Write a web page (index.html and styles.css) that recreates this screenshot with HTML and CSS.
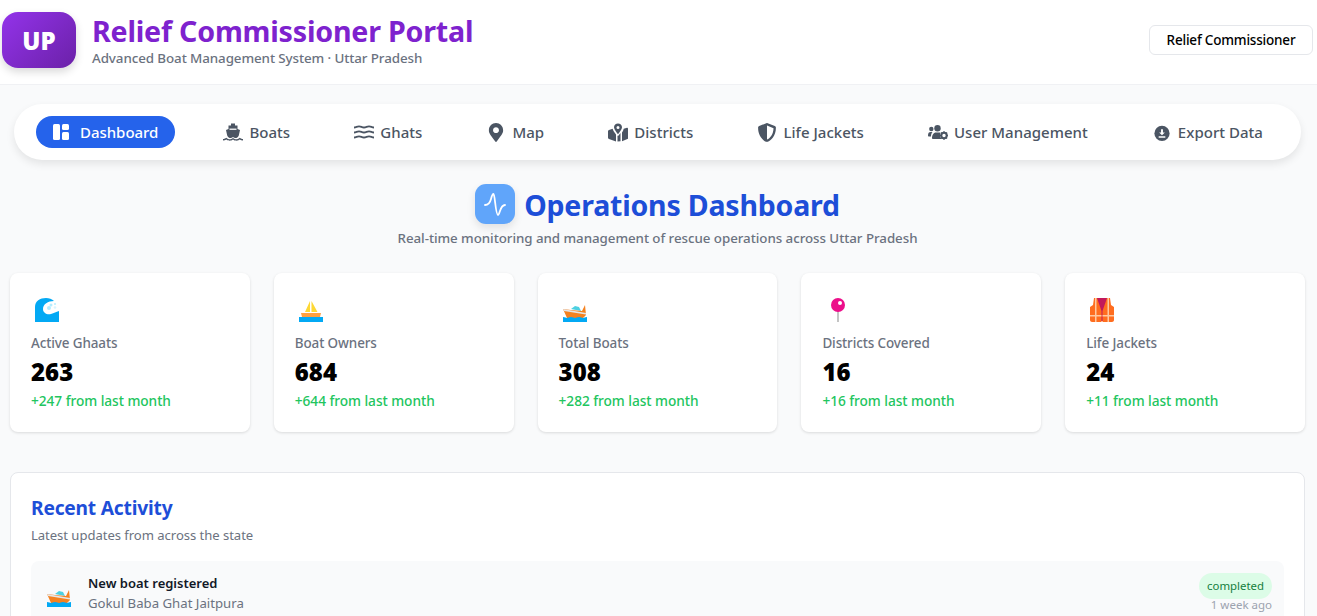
FILE: index.html
```html
<!DOCTYPE html>
<html lang="en">
<head>
<meta charset="utf-8">
<title>Relief Commissioner Portal</title>
<link rel="stylesheet" href="styles.css">
</head>
<body>
<header class="topbar">
  <div class="brand">
    <div class="logo">UP</div>
    <div>
      <div class="brand-title">Relief Commissioner Portal</div>
      <div class="brand-sub">Advanced Boat Management System · Uttar Pradesh</div>
    </div>
  </div>
  <button class="role">Relief Commissioner</button>
</header>
<nav class="nav">
  <a class="nav-item active"><svg class="ni dash" viewBox="0 0 16 16"><rect x="0" y="0" width="7" height="16" rx="1.5" fill="#fff"/><rect x="9" y="0" width="7" height="6" rx="1.5" fill="#fff"/><rect x="9" y="8" width="7" height="8" rx="1.5" fill="#fff"/></svg>Dashboard</a>
  <a class="nav-item"><svg class="ni" viewBox="0 0 20 18"><path fill="#4b5563" d="M8 0h4v2h2.500v3.500L17 6.500 15.800 12c-.8 1.800-2.200 2.600-3.300 2.600-1 0-1.800-.4-2.500-1-.7.6-1.500 1-2.500 1-1.100 0-2.500-.8-3.300-2.600L3 6.500l2.500-1V2H8z"/><path fill="#4b5563" d="M0 15.500c1.500 0 2.300-.7 3.300-1.300 1.300 1.200 2.500 1.600 3.400 1.600s2.300-.5 3.300-1.300c1 .8 2.400 1.300 3.300 1.300s2.100-.4 3.400-1.600c1 .6 1.800 1.300 3.300 1.300V17c-1.300 0-2.400-.4-3.300-1-1 .8-2.400 1.200-3.400 1.200s-2.400-.4-3.300-1.200c-.9.800-2.300 1.200-3.300 1.200S4.300 16.800 3.300 16c-.9.600-2 1-3.300 1z"/><path fill="#fff" d="M6.500 5h7v1.500h-7z" opacity=".85"/></svg>Boats</a>
  <a class="nav-item"><svg class="ni" viewBox="0 0 20 16"><path fill="none" stroke="#4b5563" stroke-width="1.800" d="M0 3c2.500 0 2.500-1.200 5-1.200S7.500 3 10 3s2.500-1.200 5-1.200S17.500 3 20 3M0 8c2.500 0 2.500-1.200 5-1.200S7.500 8 10 8s2.500-1.200 5-1.200S17.500 8 20 8M0 13c2.500 0 2.500-1.200 5-1.200s2.500 1.200 5 1.200 2.500-1.200 5-1.200 2.500 1.200 5 1.200"/></svg>Ghats</a>
  <a class="nav-item"><svg class="ni" viewBox="0 0 512 512"><path fill="#4b5563" transform="translate(64 0)" d="M172.268 501.67C26.97 291.031 0 269.413 0 192 0 85.961 85.961 0 192 0s192 85.961 192 192c0 77.413-26.97 99.031-172.268 309.67-9.535 13.774-29.93 13.773-39.464 0zM192 272c44.183 0 80-35.817 80-80s-35.817-80-80-80-80 35.817-80 80 35.817 80 80 80z"/></svg>Map</a>
  <a class="nav-item"><svg class="ni" viewBox="0 0 20 18"><path fill="#4b5563" d="M10 0c2.200 0 4 1.700 4 3.800 0 2-2.600 5.200-4 7-1.400-1.800-4-5-4-7C6 1.700 7.800 0 10 0zm0 2.400a1.500 1.500 0 1 0 0 3 1.500 1.500 0 0 0 0-3zM1 6.500l3.600-1.300c.6 2 2 4 3.400 5.700v7L1 15.500c-.6-.2-1-.6-1-1.200V7.500c0-.4.400-.8 1-1zm8.500 5.500.5.600.5-.6 2-2.500v8.300l-3 .2zM14 9c1-1.300 1.500-2.700 1.700-3.800L19 4.200c.5 0 1 .4 1 1v10l-6 2.500z"/></svg>Districts</a>
  <a class="nav-item"><svg class="ni" viewBox="0 0 512 512"><path fill="#4b5563" d="M466.5 83.7l-192-80a48.15 48.15 0 0 0-36.9 0l-192 80C27.7 91.1 16 108.6 16 128c0 198.5 114.5 335.7 221.5 380.3 11.8 4.9 25.1 4.9 36.9 0C360.1 472.6 496 349.3 496 128c0-19.4-11.7-36.9-29.5-44.3zM256.1 446.3l-.1-381 175.900 73.300c-3.300 151.400-82.100 261.100-175.800 307.700z"/></svg>Life Jackets</a>
  <a class="nav-item"><svg class="ni" viewBox="0 0 20 15"><circle cx="3.300" cy="4" r="2.200" fill="#4b5563"/><circle cx="9.500" cy="3.200" r="3.200" fill="#4b5563"/><path fill="#4b5563" d="M0 10.500C0 8 1 7 2.500 7h2C3.500 8 3 9.500 3 11.500H1c-.6 0-1-.4-1-1zm4 3C4 10 5.500 7.500 8 7.500h3c.5 0 1 .1 1.300.3-.4 2.200 0 4.200 1 6.200H5c-.6 0-1-.4-1-.5z"/><circle cx="16" cy="10.500" r="2.700" fill="none" stroke="#4b5563" stroke-width="2"/><path stroke="#4b5563" stroke-width="1.500" d="M16 6.300v1.400M16 13.300v1.400M11.800 10.500h1.400M18.800 10.500h1.400M13 7.500l1 1M18 12.500l1 1M13 13.500l1-1M18 8.500l1-1"/></svg>User Management</a>
  <a class="nav-item"><svg class="ni" viewBox="0 0 20 20"><circle cx="10" cy="11" r="8" fill="#4b5563"/><path fill="#fff" d="M9 6.500h2V10h2l-3 3-3-3h2zM6.500 14h7v1.500h-7z"/></svg>Export Data</a>
</nav>
<section class="hero">
  <h1 class="hero-title"><span class="hero-icon"><svg viewBox="0 0 24 28" width="24" height="28"><path fill="none" stroke="#fff" stroke-width="1.800" stroke-linecap="round" stroke-linejoin="round" d="M2 15C5 15 7 13 8 9 9 5 9.800 4 10.500 4 12 4 12.500 25 15 25 16.800 25 17 15 22 15"/></svg></span><span class="hero-text">Operations Dashboard</span></h1>
  <p class="hero-sub">Real-time monitoring and management of rescue operations across Uttar Pradesh</p>
</section>
<section class="stats">
  <article class="card">
    <svg class="emoji" viewBox="0 0 24 24"><path fill="#03a9f4" d="M0 24V9C0 3 5 0 11 0c3 0 6 1 8 3C13 3 8 6 8 11c0 4 4 6 8 5 3-1 5-2 8-3v11z"/><circle cx="16" cy="7" r="1.500" fill="#b3ecff"/><circle cx="20" cy="6" r="1" fill="#b3ecff"/><circle cx="14" cy="10" r="2" fill="#b3ecff"/><circle cx="20" cy="9.500" r="1.300" fill="#d9f5ff"/></svg>
    <div class="label">Active Ghaats</div>
    <div class="value">263</div>
    <div class="delta">+247 from last month</div>
  </article>
  <article class="card">
    <svg class="emoji" viewBox="0 0 24 24"><path fill="#fdd835" d="M11 3 6 14h5zM12.500 3v11h6z"/><path fill="#ffa040" d="M2 15h20l-1 4H3z"/><path fill="#03a9f4" d="M0 19h24v5H0z"/></svg>
    <div class="label">Boat Owners</div>
    <div class="value">684</div>
    <div class="delta">+644 from last month</div>
  </article>
  <article class="card">
    <svg class="emoji" viewBox="0 0 24 24"><path fill="#4dd0e1" d="M8 11l4-3 4 1 2 4z"/><path fill="#f58220" d="M0 11l8 1 11 1 3-6 1 10-3 3H4z"/><path fill="#e6e6e6" d="M0 11l23 4v1.500L1 13z"/><path fill="#03a9f4" d="M0 19c2 0 3 1 4 1s2-1 4-1 3 1 4 1 2-1 4-1 3 1 4 1 2-1 4-1v5H0z"/></svg>
    <div class="label">Total Boats</div>
    <div class="value">308</div>
    <div class="delta">+282 from last month</div>
  </article>
  <article class="card">
    <svg class="emoji" viewBox="0 0 24 24"><rect x="11" y="12" width="2" height="12" fill="#c4c4c4"/><circle cx="12" cy="7" r="7" fill="#ec0f8a"/><circle cx="14" cy="5" r="2" fill="#fff"/></svg>
    <div class="label">Districts Covered</div>
    <div class="value">16</div>
    <div class="delta">+16 from last month</div>
  </article>
  <article class="card">
    <svg class="emoji" viewBox="0 0 24 24"><path fill="#c2185b" d="M6 0h12v23H6z"/><path fill="#ff6d1f" d="M7 0l4.500 13v11H2c-1 0-2-1-2-2V9l3-2 1-7zM17 0l-4.500 13v11H22c1 0 2-1 2-2V9l-3-2-1-7z"/><path fill="#ffc9a0" d="M5 0h1.500v24H5zM17.500 0H19v24h-1.500zM0 17h11.500v1.500H0zM12.500 17H24v1.500H12.500z"/></svg>
    <div class="label">Life Jackets</div>
    <div class="value">24</div>
    <div class="delta">+11 from last month</div>
  </article>
</section>
<section class="panel">
  <h2 class="panel-title">Recent Activity</h2>
  <p class="panel-sub">Latest updates from across the state</p>
  <div class="activity">
    <svg class="emoji small" viewBox="0 0 24 24"><path fill="#4dd0e1" d="M8 11l4-3 4 1 2 4z"/><path fill="#f58220" d="M0 11l8 1 11 1 3-6 1 10-3 3H4z"/><path fill="#e6e6e6" d="M0 11l23 4v1.500L1 13z"/><path fill="#03a9f4" d="M0 19c2 0 3 1 4 1s2-1 4-1 3 1 4 1 2-1 4-1 3 1 4 1 2-1 4-1v5H0z"/></svg>
    <div class="activity-body">
      <div class="activity-title">New boat registered</div>
      <div class="activity-place">Gokul Baba Ghat Jaitpura</div>
    </div>
    <div class="activity-meta">
      <span class="badge">completed</span>
      <span class="when">1 week ago</span>
    </div>
  </div>
</section>
</body>
</html>
```
FILE: styles.css
```css
* { box-sizing: border-box; }
html, body { margin: 0; height: 616px; overflow: hidden; }
body {
  background: #f9fafb;
  font-family: "Noto Sans", "Open Sans", sans-serif;
  color: #111827;
}
.topbar {
  height: 85px;
  background: #fff;
  border-bottom: 1px solid #f0f1f4;
  display: flex;
  align-items: center;
  justify-content: space-between;
  padding: 0 4px 0 2px;
}
.brand { display: flex; align-items: center; gap: 16px; }
.logo {
  width: 74px;
  height: 56px;
  margin-top: -4px;
  border-radius: 16px;
  background: linear-gradient(135deg, #9333ea, #6b21a8);
  box-shadow: 0 4px 8px rgba(0,0,0,.15);
  color: #fff;
  font-weight: 900;
  font-size: 24px;
  display: flex;
  align-items: center;
  justify-content: center;
}
.brand-title {
  font-size: 28.600px;
  line-height: 36px;
  font-weight: 700;
  color: #7e22ce;
  letter-spacing: -.2px;
  margin-top: -5px;
}
.brand-sub { font-size: 13.400px; line-height: 18px; font-weight: 500; color: #6b7280; letter-spacing: -.1px; }
.role {
  width: 164px;
  height: 30px;
  margin-top: -5px;
  background: #fff;
  border: 1px solid #e5e7eb;
  border-radius: 6px;
  font: 500 13.500px "Noto Sans", sans-serif;
  letter-spacing: -.2px;
  color: #000;
  padding: 0;
}
.nav {
  margin: 19px 16px 0 14px;
  height: 56px;
  background: #fff;
  border-radius: 28px;
  box-shadow: 0 4px 8px rgba(0,0,0,.09);
  display: flex;
  align-items: center;
  justify-content: space-between;
  padding: 0 22px;
}
.nav-item {
  display: flex;
  align-items: center;
  gap: 6px;
  height: 32px;
  padding: 0 16px;
  border-radius: 16px;
  font-size: 15px;
  font-weight: 500;
  letter-spacing: .02px;
  color: #4b5563;
}
.nav-item.active { background: #2563eb; color: #fff; padding: 0 17px; gap: 11px; letter-spacing: -.03px; }
.ni { width: 20px; height: 19px; flex: none; }
.ni.dash { width: 16px; height: 16px; }
.hero { text-align: center; margin-top: 23px; padding-right: 2px; }
.hero-title {
  margin: 0;
  display: flex;
  align-items: center;
  justify-content: center;
  gap: 9px;
  font-size: 28.500px;
  line-height: 40px;
  font-weight: 700;
  color: #1d4ed8;
  letter-spacing: -.2px;
}
.hero-text { margin-top: 2px; }
.hero-icon {
  width: 40px;
  height: 40px;
  border-radius: 11px;
  background: #60a5fa;
  box-shadow: 0 4px 8px rgba(0,0,0,.1);
  display: flex;
  align-items: center;
  justify-content: center;
}
.hero-sub { margin: 2px 0 0; font-size: 13.350px; line-height: 22px; font-weight: 500; color: #6b7280; letter-spacing: -.05px; }
.stats {
  margin: 24px 12px 0 10px;
  display: grid;
  grid-template-columns: repeat(5, 1fr);
  gap: 24px;
}
.card {
  height: 159px;
  background: #fff;
  border-radius: 8px;
  box-shadow: 0 1px 3px rgba(0,0,0,.13);
  padding: 25px 21px 0;
}
.emoji { display: block; width: 24px; height: 24px; margin-left: 4px; }
.label { margin-top: 11px; font-size: 13.450px; line-height: 20px; font-weight: 500; color: #6b7280; letter-spacing: -.1px; }
.value { margin-top: 3px; font-size: 24px; line-height: 32px; font-weight: 900; color: #000; }
.delta { margin-top: 3px; font-size: 13.700px; line-height: 20px; font-weight: 500; color: #22c55e; letter-spacing: -.05px; }
.panel {
  margin: 40px 12px 0 10px;
  background: #fff;
  border: 1px solid #e5e7eb;
  border-radius: 8px;
  padding: 21px 20px 20px;
  height: 300px;
}
.panel-title { margin: 0; font-size: 19.200px; line-height: 28px; font-weight: 700; color: #1d4ed8; letter-spacing: -.2px; }
.panel-sub { margin: 3px 0 0; font-size: 13.100px; line-height: 20px; color: #6b7280; letter-spacing: -.05px; }
.activity {
  margin-top: 16px;
  background: #f9fafb;
  border-radius: 8px;
  padding: 12px;
  display: flex;
  align-items: flex-start;
  gap: 17px;
}
.emoji.small { margin-top: 10px; flex: none; }
.activity-body { flex: 1; }
.activity-title { font-size: 13px; line-height: 20px; font-weight: 600; color: #111827; }
.activity-place { font-size: 13.200px; line-height: 20px; color: #6b7280; }
.activity-meta { display: flex; flex-direction: column; align-items: flex-end; gap: 0; }
.badge {
  height: 26px;
  padding: 0 8px;
  border-radius: 13px;
  background: #dcfce7;
  color: #15803d;
  font-size: 11.400px;
  line-height: 26px;
}
.when { font-size: 11.500px; line-height: 14px; margin-top: -1px; color: #9ca3af; }
```
